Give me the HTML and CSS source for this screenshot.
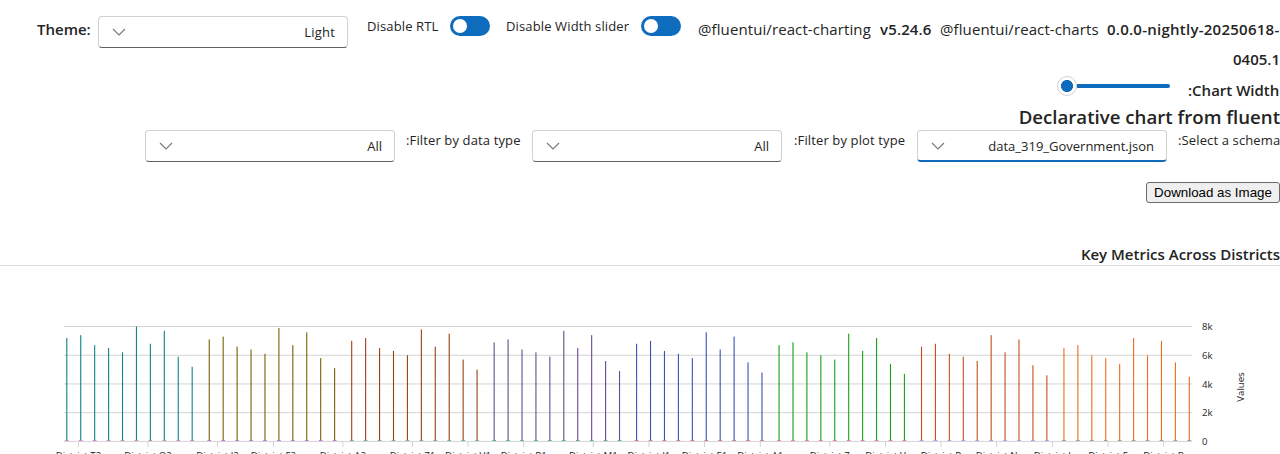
FILE: index.html
```html
<!DOCTYPE html>
<html lang="en">
<head>
<meta charset="utf-8">
<title>Declarative chart from fluent</title>
<link rel="stylesheet" href="styles.css">
</head>
<body>
<header class="topbar">
  <strong class="theme">Theme:</strong>
  <div class="dropdown"><svg class="chevron" viewBox="0 0 14 8"><path d="M1 1l6 6 6-6"/></svg><span class="light">Light</span></div>
  <label class="small rtl">Disable RTL</label>
  <span class="toggle"></span>
  <label class="small width-label">Disable Width slider</label>
  <span class="toggle"></span>
  <span class="pkg charting">@fluentui/react-charting</span>
  <strong class="version v5">v5.24.6</strong>
  <span class="pkg charts">@fluentui/react-charts</span>
  <strong class="version nightly">0.0.0-nightly-20250618-</strong>
</header>
<div class="wrap-line"><strong class="version tail">0405.1</strong></div>
<div class="slider-row">
  <div class="slider"><span class="thumb"></span><span class="rail"></span></div>
  <strong class="chart-width">:Chart Width</strong>
</div>
<h2 class="heading"><span>Declarative chart from fluent</span></h2>
<div class="filters">
  <div class="dropdown"><svg class="chevron" viewBox="0 0 14 8"><path d="M1 1l6 6 6-6"/></svg><span class="all">All</span></div>
  <label class="small data-label">:Filter by data type</label>
  <div class="dropdown"><svg class="chevron" viewBox="0 0 14 8"><path d="M1 1l6 6 6-6"/></svg><span class="all">All</span></div>
  <label class="small plot-label">:Filter by plot type</label>
  <div class="dropdown focused"><svg class="chevron" viewBox="0 0 14 8"><path d="M1 1l6 6 6-6"/></svg><span class="file">data_319_Government.json</span></div>
  <label class="small schema-label">:Select a schema</label>
</div>
<div class="actions"><button class="download">Download as Image</button></div>
<div class="title-row"><strong class="chart-title">Key Metrics Across Districts</strong></div>
<svg class="chart" id="chart" width="1280" height="188" viewBox="0 266 1280 188"></svg>
<script src="chart.js"></script>
</body>
</html>
```
FILE: styles.css
```css
* { box-sizing: border-box; }
body {
  margin: 0;
  width: 1280px;
  height: 454px;
  overflow: hidden;
  background: #fff;
  color: #242424;
  font-family: "Open Sans", "Noto Sans", sans-serif;
  font-size: 13px;
  white-space: nowrap;
}
strong { font-weight: 600; }
.topbar {
  display: grid;
  grid-template-columns: 61px 269px 83px 56px 135px 57px 182px 60px 167px 173px;
  height: 48px;
  padding: 16px 0 0 37px;
  align-items: start;
}
.theme, .version, .pkg { font-size: 15px; line-height: 27px; }
.pkg { letter-spacing: 0.1px; }
.v5 { letter-spacing: 0.15px; }
.nightly { letter-spacing: 0.25px; }
.small { line-height: 20px; font-size: 13px; letter-spacing: 0.13px; }
.dropdown {
  display: flex;
  align-items: center;
  justify-content: space-between;
  width: 250px;
  height: 32px;
  padding: 0 12px 0 13px;
  border: 1px solid #d1d1d1;
  border-bottom-color: #616161;
  border-radius: 4px;
}
.focused { border-bottom: 2px solid #0f6cbd; }
.focused .file { padding-top: 1px; }
.chevron { width: 14px; height: 8px; fill: none; stroke: #777; stroke-width: 1.1; }
.light { letter-spacing: 0.2px; }
.toggle {
  width: 40px;
  height: 20px;
  padding: 3px;
  border-radius: 10px;
  background: #0f6cbd;
}
.toggle::before {
  content: "";
  display: block;
  width: 14px;
  height: 14px;
  border-radius: 50%;
  background: #fff;
}
.wrap-line { display: flex; justify-content: flex-end; height: 28px; }
.wrap-line .version { line-height: 22px; }
.slider-row { display: flex; justify-content: flex-end; height: 29px; }
.slider { display: flex; align-items: center; width: 113px; height: 20px; margin-right: 18px; }
.thumb {
  width: 20px;
  height: 20px;
  border: 1px solid #d1d1d1;
  border-radius: 50%;
  background: radial-gradient(circle, #0f6cbd 5.7px, #fff 6.3px);
}
.rail { width: 93px; height: 4px; border-radius: 0 2px 2px 0; background: #0f6cbd; }
.chart-width { width: 92px; font-size: 15px; line-height: 28px; }
.heading {
  display: flex;
  justify-content: flex-end;
  height: 25px;
  margin: 0;
  font-size: 18.65px;
  font-weight: 600;
  line-height: 23px;
}
.filters {
  display: grid;
  grid-template-columns: 261px 126px 262px 123px 261px 102px;
  height: 52px;
  padding-left: 145px;
  align-items: start;
}
.actions { display: flex; justify-content: flex-end; height: 62px; }
.download {
  width: 134px;
  height: 21px;
  padding: 0;
  border: 1px solid #6b6b6b;
  border-radius: 3px;
  background: #efefef;
  color: #000;
  font: 13.333px "Liberation Sans", Arial, sans-serif;
}
.title-row {
  display: flex;
  justify-content: flex-end;
  height: 22px;
  border-bottom: 1px solid #ddd;
  font-size: 15px;
  line-height: 20px;
}
.chart { display: block; }
.chart text { font-family: "Open Sans", "Noto Sans", sans-serif; font-size: 9.6px; fill: #242424; }
.chart .y-label { font-weight: 500; }
.chart .x-label { font-weight: 500; font-size: 9.7px; }
```
FILE: chart.js
```js
const svg = document.getElementById('chart');
function add(name, attrs, text) {
  const el = document.createElementNS('http://www.w3.org/2000/svg', name);
  for (const key in attrs) el.setAttribute(key, attrs[key]);
  if (text) el.textContent = text;
  svg.appendChild(el);
}
const baseline = 441.4;
const unit = 14.36;
['0', '2k', '4k', '6k', '8k'].forEach((label, i) => {
  const y = baseline - i * 2 * unit;
  add('line', { x1: 64, x2: 1192, y1: y, y2: y, stroke: '#d3d3d3', 'stroke-width': 1 });
  add('text', { x: 1202, y: y + 3.6, class: 'y-label' }, label);
});
const series = [
  { color: '#0f8387', base: '#c58ac5', values: [7.2, 7.4, 6.7, 6.5, 6.2, 8, 6.8, 7.7, 5.9, 5.2] },
  { color: '#7a6100', base: '#b47cc9', values: [7.1, 7.3, 6.6, 6.4, 6.1, 7.9, 6.7, 7.6, 5.8, 5.1] },
  { color: '#9b4215', base: '#7aa99b', values: [7, 7.2, 6.5, 6.3, 6, 7.8, 6.6, 7.5, 5.7, 5] },
  { color: '#674c91', base: '#63a895', values: [6.9, 7.1, 6.4, 6.2, 5.9, 7.7, 6.5, 7.4, 5.6, 4.9] },
  { color: '#3853b5', base: '#c97999', values: [6.8, 7, 6.3, 6.1, 5.8, 7.6, 6.4, 7.3, 5.5, 4.8] },
  { color: '#17a117', base: '#df76b5', values: [6.7, 6.9, 6.2, 6, 5.7, 7.5, 6.3, 7.2, 5.4, 4.7] },
  { color: '#c4501b', base: '#a99bdd', values: [6.6, 6.8, 6.1, 5.9, 5.6, 7.4, 6.2, 7.1, 5.3, 4.6] },
  { color: '#f06a1d', base: '#9aa27f', values: [6.5, 6.7, 6, 5.8, 5.4, 7.2, 6, 7, 5.5, 4.5] }
];
series.forEach((group, g) => group.values.forEach((value, i) => {
  const x = 66.8 + g * 142.45 + i * 13.93;
  const top = baseline - value * unit;
  add('rect', { x: x - 0.55, y: top, width: 1.1, height: baseline - top - 1, fill: group.color });
  add('rect', { x: x - 1.8, y: 440, width: 3.6, height: 1, fill: group.base });
}));
const ticks = [
  [78.5, 'T2'], [148, 'O2'], [217.5, 'J2'], [273.4, 'F2'], [342.9, 'A2'], [412.5, 'Z1'], [468, 'V1'],
  [523.7, 'R1'], [593.3, 'M1'], [649, 'I1'], [704.6, 'E1'], [760.3, 'A1'], [829.8, 'Z'], [885.5, 'V'],
  [941, 'R'], [996.7, 'N'], [1052.4, 'J'], [1108, 'F'], [1163.6, 'B']
];
ticks.forEach(([x, name]) => {
  add('line', { x1: x, x2: x, y1: 441, y2: 447, stroke: '#d3d3d3', 'stroke-width': 1 });
  add('text', { x: x, y: 458.7, 'text-anchor': 'middle', class: 'x-label' }, 'District ' + name);
});
add('text', { x: 0, y: 0, 'text-anchor': 'middle', transform: 'translate(1244 387) rotate(-90)' }, 'Values');
```
